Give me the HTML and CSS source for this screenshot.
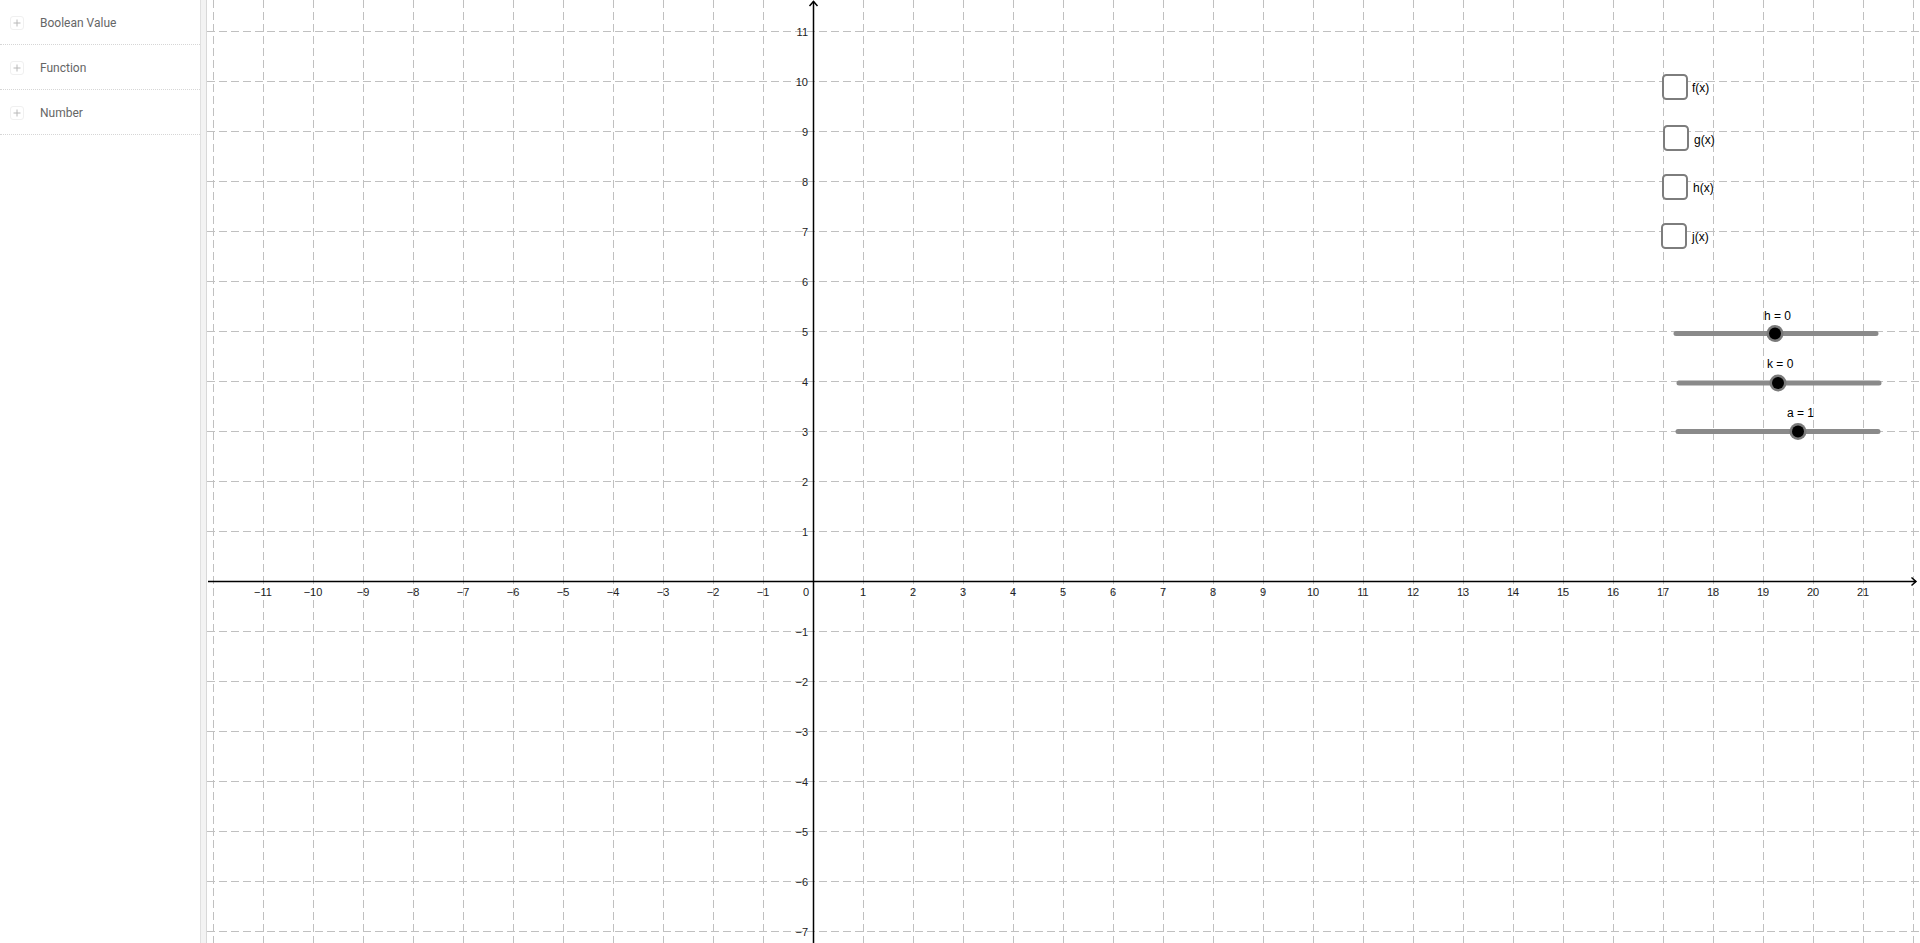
FILE: index.html
```html
<!DOCTYPE html>
<html lang="en">
<head>
<meta charset="utf-8">
<title>Graphing</title>
<link rel="stylesheet" href="styles.css">
</head>
<body>
<div class="app">
  <aside class="sidebar">
    <div class="row">
      <span class="plus"><svg width="12" height="12" viewBox="0 0 12 12"><path d="M6 2.5V9.5M2.5 6H9.5" stroke="#b8b8b8" stroke-width="1"/></svg></span>
      <span class="row-label">Boolean Value</span>
    </div>
    <div class="row">
      <span class="plus"><svg width="12" height="12" viewBox="0 0 12 12"><path d="M6 2.5V9.5M2.5 6H9.5" stroke="#b8b8b8" stroke-width="1"/></svg></span>
      <span class="row-label">Function</span>
    </div>
    <div class="row">
      <span class="plus"><svg width="12" height="12" viewBox="0 0 12 12"><path d="M6 2.5V9.5M2.5 6H9.5" stroke="#b8b8b8" stroke-width="1"/></svg></span>
      <span class="row-label">Number</span>
    </div>
  </aside>
  <div class="divider"></div>
  <main class="graph">
    <svg class="canvas" width="1713" height="943" viewBox="0 0 1713 943">
      <path class="grid" d="M6.5 0V943M56.5 0V943M106.5 0V943M156.5 0V943M206.5 0V943M256.5 0V943M306.5 0V943M356.5 0V943M406.5 0V943M456.5 0V943M506.5 0V943M556.5 0V943M656.5 0V943M706.5 0V943M756.5 0V943M806.5 0V943M856.5 0V943M906.5 0V943M956.5 0V943M1006.5 0V943M1056.5 0V943M1106.5 0V943M1156.5 0V943M1206.5 0V943M1256.5 0V943M1306.5 0V943M1356.5 0V943M1406.5 0V943M1456.5 0V943M1506.5 0V943M1556.5 0V943M1606.5 0V943M1656.5 0V943M1706.5 0V943"/>
      <path class="grid" d="M0 31.5H1713M0 81.5H1713M0 131.5H1713M0 181.5H1713M0 231.5H1713M0 281.5H1713M0 331.5H1713M0 381.5H1713M0 431.5H1713M0 481.5H1713M0 531.5H1713M0 631.5H1713M0 681.5H1713M0 731.5H1713M0 781.5H1713M0 831.5H1713M0 881.5H1713M0 931.5H1713"/>
      <path class="axis" d="M606.5 1.5V943M1 581.5H1709"/>
      <path class="axis" d="M602.5 6L606.5 1.5L610.5 6M1704.5 577.5L1709 581.5L1704.5 585.5"/>
      <g class="xlabels">
        <text x="56" y="596">−11</text><text x="106" y="596">−10</text><text x="156" y="596">−9</text><text x="206" y="596">−8</text><text x="256" y="596">−7</text><text x="306" y="596">−6</text><text x="356" y="596">−5</text><text x="406" y="596">−4</text><text x="456" y="596">−3</text><text x="506" y="596">−2</text><text x="556" y="596">−1</text>
        <text x="599" y="596">0</text>
        <text x="656" y="596">1</text><text x="706" y="596">2</text><text x="756" y="596">3</text><text x="806" y="596">4</text><text x="856" y="596">5</text><text x="906" y="596">6</text><text x="956" y="596">7</text><text x="1006" y="596">8</text><text x="1056" y="596">9</text><text x="1106" y="596">10</text><text x="1156" y="596">11</text><text x="1206" y="596">12</text><text x="1256" y="596">13</text><text x="1306" y="596">14</text><text x="1356" y="596">15</text><text x="1406" y="596">16</text><text x="1456" y="596">17</text><text x="1506" y="596">18</text><text x="1556" y="596">19</text><text x="1606" y="596">20</text><text x="1656" y="596">21</text>
      </g>
      <g class="ylabels">
        <text x="601" y="35.5">11</text><text x="601" y="85.5">10</text><text x="601" y="135.5">9</text><text x="601" y="185.5">8</text><text x="601" y="235.5">7</text><text x="601" y="285.5">6</text><text x="601" y="335.5">5</text><text x="601" y="385.5">4</text><text x="601" y="435.5">3</text><text x="601" y="485.5">2</text><text x="601" y="535.5">1</text>
        <text x="601" y="635.5">−1</text><text x="601" y="685.5">−2</text><text x="601" y="735.5">−3</text><text x="601" y="785.5">−4</text><text x="601" y="835.5">−5</text><text x="601" y="885.5">−6</text><text x="601" y="935.5">−7</text>
      </g>
      <g class="checks">
        <rect x="1456" y="75" width="24" height="24" rx="3.5"/>
        <rect x="1457" y="126" width="24" height="24" rx="3.5"/>
        <rect x="1456" y="175" width="24" height="24" rx="3.5"/>
        <rect x="1455" y="224" width="24" height="24" rx="3.5"/>
      </g>
      <g class="wlabels">
        <text x="1485" y="92">f(x)</text>
        <text x="1487" y="144">g(x)</text>
        <text x="1486" y="192">h(x)</text>
        <text x="1485" y="241">j(x)</text>
        <text x="1557" y="319.5">h = 0</text>
        <text x="1560" y="368">k = 0</text>
        <text x="1580" y="416.5">a = 1</text>
      </g>
      <g class="sliders">
        <path d="M1469 333.5H1669M1472 383H1672M1471 431.5H1671"/>
      </g>
      <g class="knobs">
        <circle class="halo" cx="1568" cy="333.5" r="8.5"/><circle class="dot" cx="1568" cy="333.5" r="6"/>
        <circle class="halo" cx="1571" cy="383" r="8.5"/><circle class="dot" cx="1571" cy="383" r="6"/>
        <circle class="halo" cx="1591" cy="431.5" r="8.5"/><circle class="dot" cx="1591" cy="431.5" r="6"/>
      </g>
    </svg>
  </main>
</div>
</body>
</html>
```

FILE: styles.css
```css
html, body {
  margin: 0;
  padding: 0;
  background: #ffffff;
}

.app {
  display: flex;
  width: 1920px;
  height: 943px;
  overflow: hidden;
}

.sidebar {
  width: 200px;
  flex: 0 0 200px;
  background: #ffffff;
  display: flex;
  flex-direction: column;
}

.row {
  height: 42px;
  padding-top: 2px;
  border-bottom: 1px dotted #d6d6d6;
  display: flex;
  align-items: center;
  padding-left: 10px;
  box-sizing: content-box;
}

.plus {
  width: 12px;
  height: 12px;
  border: 1px solid #f0f0f0;
  border-radius: 3px;
  display: flex;
  align-items: center;
  justify-content: center;
  margin-right: 16px;
}

.plus svg {
  display: block;
}

.row-label {
  font-family: Roboto, "Liberation Sans", sans-serif;
  font-size: 12px;
  color: #666666;
}

.divider {
  flex: 0 0 5px;
  width: 5px;
  background: #f3f3f3;
  border-left: 1px solid #e0e0e0;
  border-right: 1px solid #d8d8d8;
}

.graph {
  flex: 1 1 auto;
  position: relative;
  background: #ffffff;
}

.canvas {
  display: block;
}

.grid {
  fill: none;
  stroke: #c0c0c0;
  stroke-width: 1;
  stroke-dasharray: 8 4;
}

.axis {
  fill: none;
  stroke: #000000;
  stroke-width: 1.5;
}

.xlabels text,
.ylabels text {
  font-family: "Liberation Sans", Arial, sans-serif;
  font-size: 11px;
  fill: #222222;
}

.xlabels text {
  text-anchor: middle;
}

.ylabels text {
  text-anchor: end;
}

.checks rect {
  fill: #ffffff;
  stroke: #7d7d7d;
  stroke-width: 2;
}

.wlabels text {
  font-family: "Liberation Sans", Arial, sans-serif;
  font-size: 12px;
  fill: #000000;
}

.sliders path {
  fill: none;
  stroke: #8a8a8a;
  stroke-width: 5;
  stroke-linecap: round;
}

.halo {
  fill: #7a7a7a;
}

.dot {
  fill: #000000;
}
```
